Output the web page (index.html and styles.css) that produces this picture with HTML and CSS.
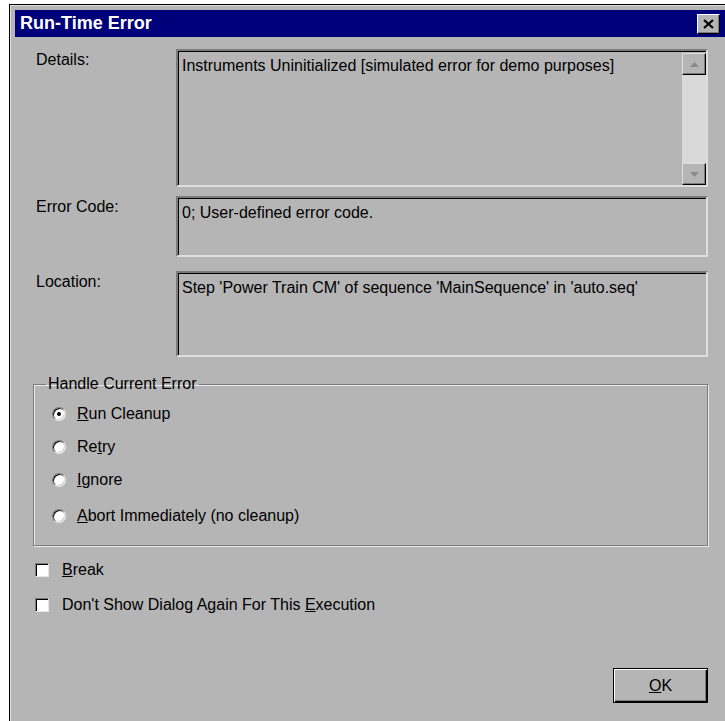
FILE: index.html
```html
<!DOCTYPE html>
<html lang="en">
<head>
<meta charset="utf-8">
<title>Run-Time Error</title>
<link rel="stylesheet" href="styles.css">
</head>
<body>
<div class="window">
  <div class="titlebar">
    <span class="title">Run-Time Error</span>
    <button class="close" type="button" aria-label="Close">
      <svg width="11" height="10" viewBox="0 0 11 10"><path d="M1 1l9 8M10 1l-9 8" stroke="#000" stroke-width="2.2" fill="none"/></svg>
    </button>
  </div>

  <div class="content">
    <div class="fields">
      <div class="label label-details">Details:</div>
      <div class="textbox tb-details">
        <div class="tb-text">Instruments Uninitialized [simulated error for demo purposes]</div>
        <div class="scrollbar">
          <div class="sb-btn"><svg width="9" height="5" viewBox="0 0 9 5"><path d="M4.5 0L9 5H0z" fill="#8a8a8a"/></svg></div>
          <div class="sb-track"></div>
          <div class="sb-btn"><svg width="9" height="5" viewBox="0 0 9 5"><path d="M0 0h9L4.5 5z" fill="#8a8a8a"/></svg></div>
        </div>
      </div>

      <div class="label label-code">Error Code:</div>
      <div class="textbox tb-code"><div class="tb-text">0; User-defined error code.</div></div>

      <div class="label label-loc">Location:</div>
      <div class="textbox tb-loc"><div class="tb-text">Step 'Power Train CM' of sequence 'MainSequence' in 'auto.seq'</div></div>
    </div>

    <fieldset class="group">
      <legend>Handle Current Error</legend>
      <label class="radio"><span class="radio-dot checked"></span><span><u>R</u>un Cleanup</span></label>
      <label class="radio"><span class="radio-dot"></span><span>Re<u>t</u>ry</span></label>
      <label class="radio"><span class="radio-dot"></span><span><u>I</u>gnore</span></label>
      <label class="radio radio-last"><span class="radio-dot"></span><span><u>A</u>bort Immediately (no cleanup)</span></label>
    </fieldset>

    <div class="checks">
      <label class="check"><span class="check-box"></span><span><u>B</u>reak</span></label>
      <label class="check"><span class="check-box"></span><span>Don't Show Dialog Again For This <u>E</u>xecution</span></label>
    </div>

    <div class="buttons">
      <button class="ok" type="button"><u>O</u>K</button>
    </div>
  </div>
</div>
</body>
</html>
```

FILE: styles.css
```css
html {
  overflow: hidden;
  background: #ffffff;
}

body {
  margin: 0;
  font-family: "Liberation Sans", Arial, sans-serif;
  font-size: 16px;
  color: #000;
}

/* dialog frame: only the left and top edges fall inside the view */
.window {
  margin: 4px 0 0 9px;
  width: 716px;
  height: 717px;
  box-sizing: border-box;
  overflow: hidden;
  background: #b5b5b5;
  border-left: 1px solid #000;
  border-top: 1px solid #000;
  box-shadow: inset 1px 1px 0 #dedede;
  padding: 5px 0 0 5px;
}

.titlebar {
  height: 27px;
  background: #00007b;
  display: flex;
  align-items: center;
  padding-left: 5px;
  box-sizing: border-box;
}

.title {
  color: #fff;
  font-weight: bold;
  font-size: 18px;
  flex: 1;
}

.close {
  width: 23px;
  height: 20px;
  margin-right: 5px;
  padding: 0;
  background: #b5b5b5;
  border: 1px solid;
  border-color: #fff #000 #000 #fff;
  box-shadow: inset -1px -1px 0 #7b7b7b;
  display: flex;
  align-items: center;
  justify-content: center;
}

.content {
  width: 693px;
  padding-top: 12px;
}

.fields {
  display: grid;
  grid-template-columns: 161px 532px;
}

.label {
  padding: 2px 0 0 21px;
}

.textbox {
  box-sizing: border-box;
  border: 2px solid;
  border-color: #7b7b7b #dedede #dedede #7b7b7b;
  box-shadow: inset 1px 1px 0 #000;
  display: flex;
}

.tb-text {
  flex: 1;
  padding: 6px 0 0 4px;
  line-height: 18px;
  white-space: nowrap;
}

.tb-details { height: 138px; }
.tb-code { height: 61px; margin-top: 9px; }
.label-code { margin-top: 9px; }
.tb-loc { height: 86px; margin-top: 14px; }
.label-loc { margin-top: 14px; }

.scrollbar {
  width: 24px;
  margin: 2px 0 0 0;
  display: flex;
  flex-direction: column;
}

.sb-btn {
  height: 22px;
  box-sizing: border-box;
  border: 1px solid;
  border-color: #dedede #000 #000 #dedede;
  box-shadow: inset -1px -1px 0 #7b7b7b;
  background: #b5b5b5;
  display: flex;
  align-items: center;
  justify-content: center;
}

.sb-track {
  flex: 1;
  background: #d9d9d9;
}

.group {
  margin: 18px 0 0 18px;
  padding: 4px 0 10px 18px;
  width: 675px;
  box-sizing: border-box;
  border: 1px solid #7b7b7b;
  box-shadow: inset 1px 1px 0 #ececec, 1px 1px 0 #ececec;
  min-inline-size: 0;
}

.group legend {
  padding: 0 2px;
  margin-left: -6px;
}

.radio {
  display: flex;
  align-items: center;
  height: 33px;
  gap: 11px;
}

.radio-last { height: 39px; }

.radio-dot {
  width: 14px;
  height: 14px;
  border-radius: 50%;
  box-sizing: border-box;
  background: #fff;
  border: 1px solid;
  border-color: #7b7b7b #e6e6e6 #e6e6e6 #7b7b7b;
  box-shadow: inset 1px 1px 0 #000, inset -1px -1px 0 #d0d0d0;
  position: relative;
}

.radio-dot.checked::after {
  content: "";
  position: absolute;
  left: 4px;
  top: 4px;
  width: 4px;
  height: 4px;
  border-radius: 50%;
  background: #000;
}

.checks {
  margin: 6px 0 0 20px;
}

.check {
  display: flex;
  align-items: center;
  height: 35px;
  gap: 13px;
}

.check-box {
  width: 14px;
  height: 14px;
  box-sizing: border-box;
  background: #fff;
  border: 1px solid;
  border-color: #7b7b7b #e6e6e6 #e6e6e6 #7b7b7b;
  box-shadow: inset 1px 1px 0 #000;
}

.buttons {
  display: flex;
  justify-content: flex-end;
  margin-top: 46px;
}

.ok {
  width: 95px;
  height: 35px;
  font: inherit;
  color: #000;
  background: #b5b5b5;
  border: 1px solid #000;
  box-shadow: inset 1px 1px 0 #fff, inset -1px -1px 0 #000, inset -2px -2px 0 #7b7b7b;
  padding: 0;
}
```
